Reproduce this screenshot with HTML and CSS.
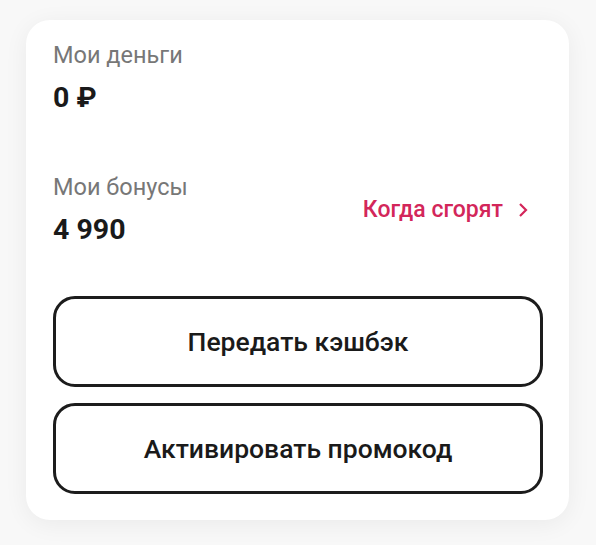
FILE: index.html
```html
<!DOCTYPE html>
<html lang="ru">
<head>
<meta charset="utf-8">
<link rel="stylesheet" href="styles.css">
</head>
<body>
<div class="card">
  <div class="block">
    <div class="label">Мои деньги</div>
    <div class="value">0 ₽</div>
  </div>
  <div class="row">
    <div class="block">
      <div class="label">Мои бонусы</div>
      <div class="value">4 990</div>
    </div>
    <a class="link">Когда сгорят
      <svg width="12" height="18" viewBox="0 0 12 18"><path d="M3 3 L9 9 L3 15" fill="none" stroke="#d3265a" stroke-width="2.2"/></svg>
    </a>
  </div>
  <div class="buttons">
    <button class="btn">Передать кэшбэк</button>
    <button class="btn">Активировать промокод</button>
  </div>
</div>
</body>
</html>
```
FILE: styles.css
```css
html, body { margin: 0; padding: 0; }
body {
  background: #f8f8f8;
  font-family: Roboto, "Noto Sans", sans-serif;
  width: 596px;
  height: 545px;
  padding: 20px 27px 0 26px;
  box-sizing: border-box;
}
.card {
  background: #fff;
  border-radius: 24px;
  box-shadow: 0 4px 24px rgba(0,0,0,0.06);
  padding: 20px 26px 26px 27px;
  height: 500px;
  box-sizing: border-box;
  display: flex;
  flex-direction: column;
}
.label {
  font-size: 23.5px;
  line-height: 30px;
  color: #777;
}
.value {
  font-size: 28.5px;
  line-height: 34px;
  font-weight: 700;
  color: #1a1a1a;
  margin-top: 11px;
}
.row {
  margin-top: 57px;
  display: flex;
  align-items: center;
  justify-content: space-between;
}
.link {
  display: flex;
  align-items: center;
  gap: 14px;
  color: #d3265a;
  font-size: 23px;
  font-weight: 500;
  margin-right: 14px;
}
.buttons {
  margin-top: auto;
  display: flex;
  flex-direction: column;
  gap: 16px;
}
.btn {
  height: 91px;
  border: 3px solid #1c1c1c;
  border-radius: 22px;
  background: #fff;
  font-family: Roboto, "Noto Sans", sans-serif;
  font-size: 26.5px;
  font-weight: 500;
  color: #1a1a1a;
}
```
